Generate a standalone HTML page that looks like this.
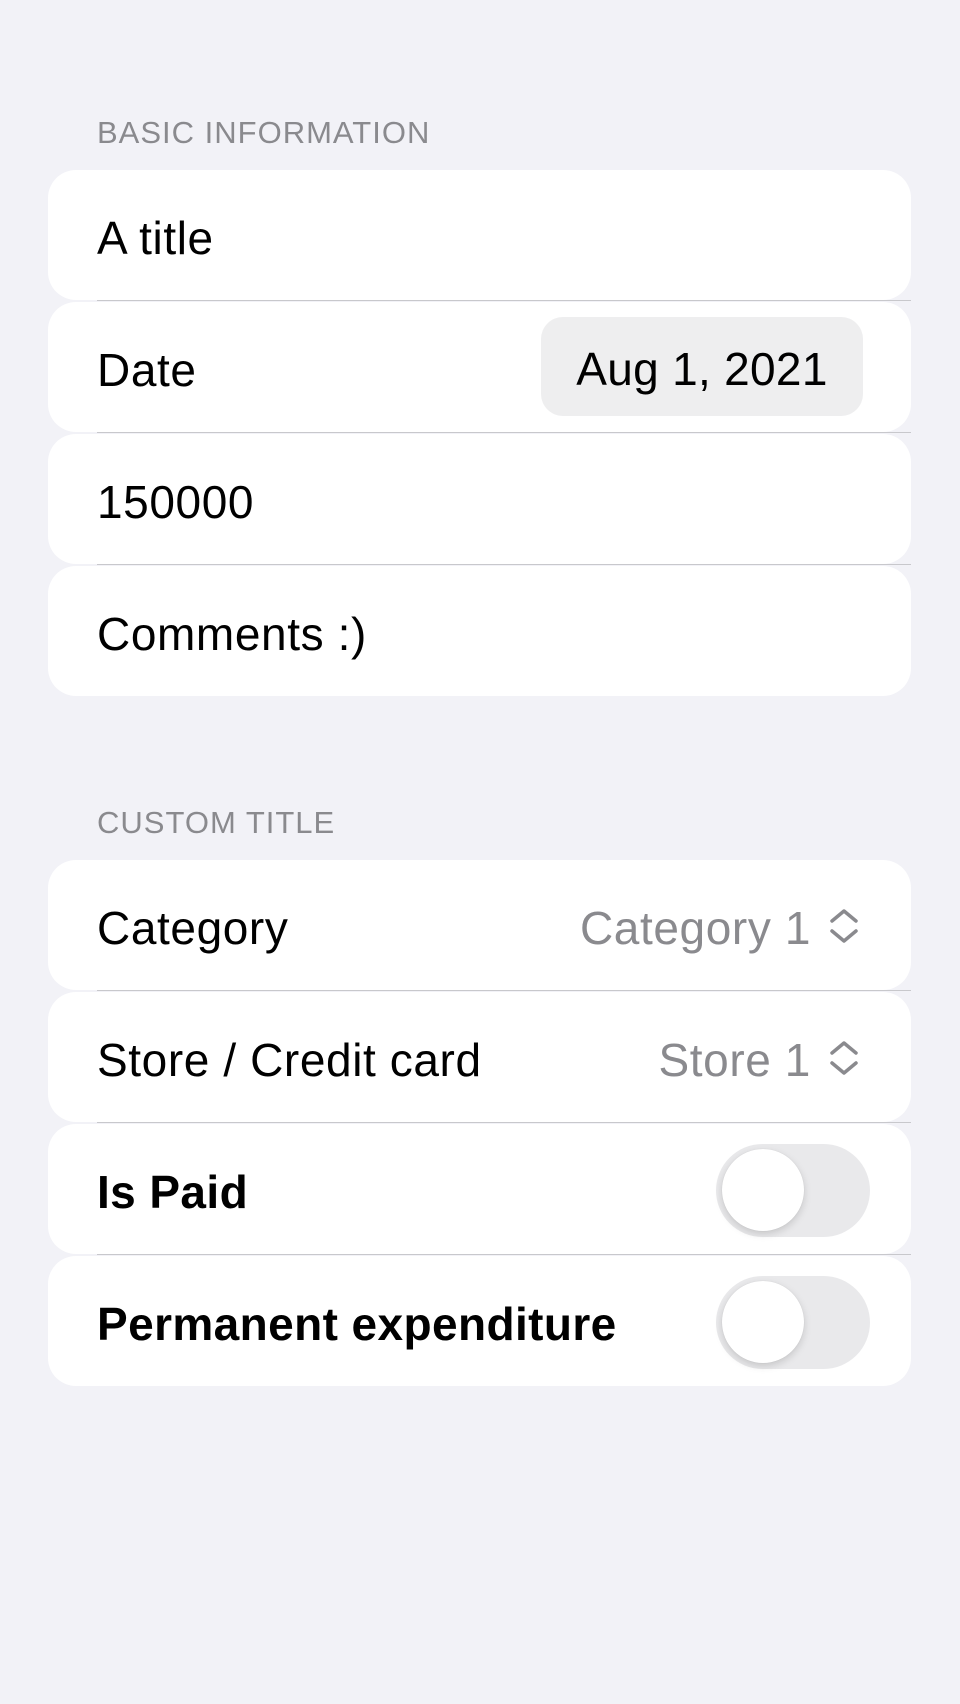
<!DOCTYPE html>
<html><head><style>
*{margin:0;padding:0;box-sizing:border-box}
body{width:960px;height:1704px;background:#f2f2f7;font-family:"Liberation Sans",Arial,sans-serif;position:relative;overflow:hidden}
.h{position:absolute;left:97px;font-size:31px;color:#8a8a8e;letter-spacing:1px}
.r{position:absolute;left:48px;width:863px;height:130px;background:#fff;border-radius:28px}
.t{position:absolute;left:49px;top:3px;line-height:130px;font-size:46px;letter-spacing:0.6px;color:#000;white-space:nowrap}
.b{font-weight:bold;letter-spacing:0.4px}
.sep{position:absolute;left:97px;width:814px;height:1px;background:#c8c8cc}
.pill{position:absolute;left:493px;top:15px;width:322px;height:99px;border-radius:22px;background:#eeeeef;font-size:46px;line-height:105px;text-align:center;letter-spacing:0.3px}
.v{position:absolute;right:100px;top:3px;line-height:130px;font-size:46px;letter-spacing:0.6px;color:#8a8a8e}
.chev{position:absolute;left:780px;top:47px}
.tg{position:absolute;left:668px;top:20px;width:154px;height:93px;border-radius:47px;background:#e9e9eb}
.kn{position:absolute;left:6px;top:5px;width:82px;height:82px;border-radius:50%;background:#fff;box-shadow:0 3px 8px rgba(0,0,0,.15),0 0 1px rgba(0,0,0,.1)}
</style></head><body>
<div class="h" style="top:115px">BASIC INFORMATION</div>
<div class="r" style="top:170px"><div class="t">A title</div></div>
<div class="sep" style="top:300px"></div>
<div class="r" style="top:302px"><div class="t">Date</div><div class="pill">Aug 1, 2021</div></div>
<div class="sep" style="top:432px"></div>
<div class="r" style="top:434px"><div class="t">150000</div></div>
<div class="sep" style="top:564px"></div>
<div class="r" style="top:566px"><div class="t">Comments :)</div></div>

<div class="h" style="top:805px">CUSTOM TITLE</div>
<div class="r" style="top:860px"><div class="t">Category</div><div class="v">Category 1</div>
<svg class="chev" width="32" height="38" viewBox="0 0 32 38"><path d="M4 14 L16 4 L28 14 M4 24 L16 34 L28 24" fill="none" stroke="#8a8a8e" stroke-width="3.5" stroke-linecap="round" stroke-linejoin="round"/></svg></div>
<div class="sep" style="top:990px"></div>
<div class="r" style="top:992px"><div class="t">Store / Credit card</div><div class="v">Store 1</div>
<svg class="chev" width="32" height="38" viewBox="0 0 32 38"><path d="M4 14 L16 4 L28 14 M4 24 L16 34 L28 24" fill="none" stroke="#8a8a8e" stroke-width="3.5" stroke-linecap="round" stroke-linejoin="round"/></svg></div>
<div class="sep" style="top:1122px"></div>
<div class="r" style="top:1124px"><div class="t b">Is Paid</div><div class="tg"><div class="kn"></div></div></div>
<div class="sep" style="top:1254px"></div>
<div class="r" style="top:1256px"><div class="t b">Permanent expenditure</div><div class="tg"><div class="kn"></div></div></div>
</body></html>
